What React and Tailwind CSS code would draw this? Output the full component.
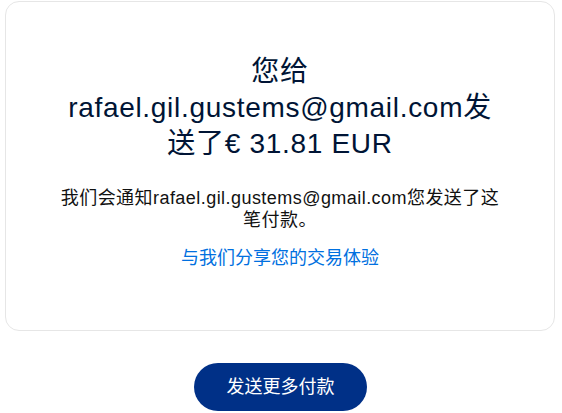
export default function App() {
  const font = { fontFamily: '"Liberation Sans", "Noto Sans CJK SC", sans-serif' };
  return (
    <div className="w-[562px] h-[413px] bg-white overflow-hidden" style={font}>
      <div className="mx-[5px] mt-[1px] w-[550px] h-[330px] rounded-[14px] border border-[#e6e6e6] flex flex-col items-center pt-[52px] px-[54px]">
        <h1 className="text-[28px] leading-[36px] tracking-wide text-[#001435] text-center font-normal">
          您给rafael.gil.gustems@gmail.com发送了€ 31.81 EUR
        </h1>
        <p className="mt-[25px] text-[18px] leading-[22px] tracking-wide text-[#111111] text-center">
          我们会通知rafael.gil.gustems@gmail.com您发送了这笔付款。
        </p>
        <a className="mt-[16px] text-[18px] leading-[22px] text-[#0070e0] text-center">
          与我们分享您的交易体验
        </a>
      </div>
      <div className="flex justify-center mt-[32px]">
        <button className="ml-[-1px] w-[173px] h-[48px] rounded-full bg-[#003087] text-white text-[18px] leading-[24px]">
          发送更多付款
        </button>
      </div>
    </div>
  );
}
